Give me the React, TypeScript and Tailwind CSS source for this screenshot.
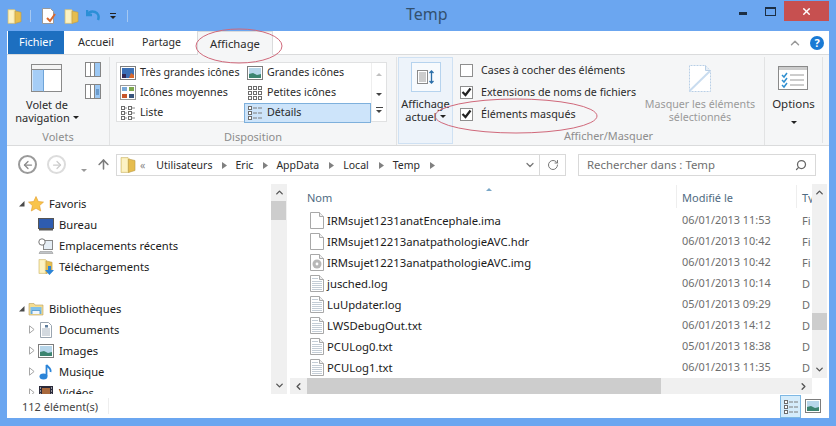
import * as React from 'react';
import { ArrowLeft, ArrowRight, ArrowUp, ChevronDown, ChevronLeft, ChevronRight, ChevronUp, RotateCw, Search, X } from 'lucide-react';

const FILES = [
	{ name: 'IRMsujet1231anatEncephale.ima', date: '06/01/2013 11:53', type: 'Fi', icon: 'blank' },
	{ name: 'IRMsujet12213anatpathologieAVC.hdr', date: '06/01/2013 10:42', type: 'Fi', icon: 'blank' },
	{ name: 'IRMsujet12213anatpathologieAVC.img', date: '06/01/2013 10:42', type: 'Fi', icon: 'disc' },
	{ name: 'jusched.log', date: '06/01/2013 10:14', type: 'D', icon: 'text' },
	{ name: 'LuUpdater.log', date: '05/01/2013 09:29', type: 'D', icon: 'text' },
	{ name: 'LWSDebugOut.txt', date: '06/01/2013 14:12', type: 'D', icon: 'text' },
	{ name: 'PCULog0.txt', date: '05/01/2013 18:38', type: 'D', icon: 'text' },
	{ name: 'PCULog1.txt', date: '06/01/2013 11:35', type: 'D', icon: 'text' },
];

function Folder({ size = 16 }: { size?: number }) {
	return (
		<svg width={size} height={size} viewBox="0 0 16 16" className="shrink-0">
			<path d="M1 .5h7l1 1v14H1z" fill="#f6e6a4" stroke="#cdb874" strokeWidth="0.6" />
			<path d="M8.500 2l6.500 1.500v10L8.500 15.500z" fill="#e6bd4e" stroke="#b99a48" strokeWidth="0.6" />
			<path d="M2 1.500h5v13H2z" fill="#fcf2c4" />
		</svg>
	);
}

function Tri({ open }: { open?: boolean }) {
	if (open) {
		return (
			<svg width="7" height="7" viewBox="0 0 7 7" className="shrink-0">
				<path d="M6.500 1v5.500H1z" fill="#4a4a4a" />
			</svg>
		);
	}
	return (
		<svg width="6" height="9" viewBox="0 0 6 9" className="shrink-0">
			<path d="M.5.8l4.600 3.700L.5 8.200z" fill="#fff" stroke="#a6a6a6" />
		</svg>
	);
}

function SmallTri() {
	return (
		<svg width="5" height="7" viewBox="0 0 5 7" className="shrink-0">
			<path d="M0 0l5 3.500L0 7z" fill="#808080" />
		</svg>
	);
}

function Caret({ color = '#222' }: { color?: string }) {
	return (
		<svg width="6" height="3" viewBox="0 0 6 3" className="inline-block shrink-0">
			<path d="M0 0h6L3 3z" fill={color} />
		</svg>
	);
}

function PaneIcon({ side }: { side: 'left' | 'right' | 'detail' }) {
	if (side === 'left') {
		return (
			<svg width="32" height="29" viewBox="0 0 32 29">
				<rect x=".5" y=".5" width="30" height="27" fill="#fff" stroke="#8a8a8a" />
				<rect x="1" y="1" width="29" height="4" fill="#f4f4f4" />
				<path d="M.5 5.500h30" stroke="#8a8a8a" />
				<rect x="1.500" y="6" width="11" height="21" fill="#a5cdf6" />
				<path d="M12.500 5.500v22" stroke="#6ea4d8" />
			</svg>
		);
	}
	return (
		<svg width="16" height="15" viewBox="0 0 16 15">
			<rect x=".5" y=".5" width="15" height="14" fill="#fff" stroke="#858585" />
			<rect x="10" y="1" width="5" height="13" fill="#9cc8f4" />
			<path d="M5.500 1v13M9.500 1v13" stroke="#858585" />
			{side === 'detail' && <path d="M11 6h3M11 8h3M11 10h3" stroke="#3a6ea5" />}
		</svg>
	);
}

function ViewIcon({ kind }: { kind: string }) {
	if (kind === 'xl' || kind === 'l') {
		return (
			<svg width="16" height="14" viewBox="0 0 16 14" className="shrink-0">
				<rect x=".5" y=".5" width="15" height="13" fill="#fff" stroke="#7d7d7d" />
				<rect x="2" y="2" width="12" height="10" fill={kind === 'xl' ? '#3b6fb5' : '#b7d6ea'} />
				{kind === 'xl' ? (
					<>
						<path d="M2 12V8h4v4z" fill="#332a55" />
						<path d="M9 12l2-5 3 2v3z" fill="#d8682c" />
					</>
				) : (
					<path d="M2 12V8l4-1 4 2 4-1v4z" fill="#3c8470" />
				)}
			</svg>
		);
	}
	if (kind === 'm') {
		return (
			<svg width="16" height="15" viewBox="0 0 16 15" className="shrink-0">
				<rect x=".5" y=".5" width="15" height="14" fill="#fff" stroke="#9a9a9a" />
				<rect x="2" y="2" width="5" height="4" fill="#79a9d8" />
				<rect x="9" y="2" width="5" height="4" fill="#7da84c" />
				<rect x="2" y="9" width="5" height="4" fill="#c8552a" />
				<rect x="9" y="9" width="5" height="4" fill="#38547c" />
			</svg>
		);
	}
	const cols = kind === 's' ? [1, 6, 11] : kind === 'list' ? [1, 8] : [1];
	const rows = [1, 6, 11];
	return (
		<svg width="16" height="15" viewBox="0 0 16 15" className="shrink-0">
			{cols.map((x) =>
				rows.map((y) => (
					<rect key={`${x}-${y}`} x={x + 0.5} y={y + 0.5} width="3" height="3" fill="#fff" stroke="#6d6d6d" />
				)),
			)}
			{kind === 'list' && <path d="M5 3h2M5 8h2M5 13h2M12 3h3M12 8h3M12 13h3" stroke="#8a8a8a" />}
			{kind === 'details' && <path d="M6 3h10M6 8h10M6 13h10" stroke="#7d7d7d" strokeDasharray="4 1" />}
		</svg>
	);
}

function FileIcon({ kind }: { kind: string }) {
	return (
		<svg width="14" height="17" viewBox="0 0 14 17" className="shrink-0">
			<path d="M.5.5h9l4 4v12H.5z" fill="#fff" stroke="#a8a8a8" />
			<path d="M9.500.5v4h4" fill="#eee" stroke="#a8a8a8" />
			{kind === 'text' && (
				<path d="M2 3.500h6M2 6.500h10M2 8.500h10M2 10.500h10M2 12.500h10M2 14.500h10" stroke="#c4cdd6" />
			)}
			{kind === 'disc' && (
				<>
					<circle cx="7" cy="10" r="4.500" fill="#b8b8b8" />
					<circle cx="7" cy="10" r="1.400" fill="#fff" />
				</>
			)}
		</svg>
	);
}

function TreeRow({ label, indent, open, arrow, icon, mt }: { label: string; indent: boolean; open?: boolean; arrow?: boolean; icon: React.ReactNode; mt?: string }) {
	return (
		<div className={`flex h-[21px] shrink-0 items-center text-[11.2px] text-[#1b1b1b] ${mt ?? ''}`}>
			<div className={`flex w-[11px] shrink-0 justify-center ${indent ? 'ml-[19px]' : 'ml-[9px]'}`}>
				{arrow && <Tri open={open} />}
			</div>
			<div className="flex w-[17px] shrink-0 justify-center">{icon}</div>
			<span className="ml-[5px] whitespace-nowrap">{label}</span>
		</div>
	);
}

function Check({ checked }: { checked?: boolean }) {
	return (
		<div className="flex h-[13px] w-[13px] shrink-0 items-center justify-center border border-[#8e8e8e] bg-white">
			{checked && (
				<svg width="11" height="10" viewBox="0 0 11 10">
					<path d="M1.500 5l3 3L9.500 1.500" fill="none" stroke="#222" strokeWidth="2.200" />
				</svg>
			)}
		</div>
	);
}

function GalleryItem({ kind, label, selected }: { kind: string; label: string; selected?: boolean }) {
	return (
		<div className={`flex h-[20px] items-center pb-[1px] ${selected ? 'border border-[#7eb0dc] bg-[#cde4fa] pl-[2px]' : 'pl-[3px]'}`}>
			<ViewIcon kind={kind} />
			<span className="ml-[4px] whitespace-nowrap pb-px text-[10.7px]">{label}</span>
		</div>
	);
}

export default function App() {
	return (
		<div className="relative flex h-[426px] w-[836px] flex-col overflow-hidden bg-[#6ba6f0] font-['Noto_Sans',sans-serif] text-[11px] leading-none text-[#2b2b2b]">
			{/* title bar */}
			<div className="relative flex h-[31px] shrink-0 items-start pl-[7px]">
				<div className="mt-[8px] flex items-center">
					<Folder size={15} />
					<div className="ml-[8px] h-[12px] w-px bg-[#a5c8f2]" />
					<svg width="16" height="16" viewBox="0 0 16 16" className="ml-[10px]">
						<path d="M1.500.5h8l3 3v12h-11z" fill="#fff" stroke="#999" />
						<path d="M6 10l3 3 5-7" fill="none" stroke="#d8672e" strokeWidth="2" />
					</svg>
					<div className="ml-[7px]">
						<Folder size={15} />
					</div>
					<svg width="15" height="14" viewBox="0 0 15 14" className="ml-[7px]">
						<path d="M1 1v5h5M1.500 6C3 3 6 2 9 3s4.500 4 3 8" fill="none" stroke="#2b8fd6" strokeWidth="2.500" />
					</svg>
					<div className="ml-[9px] flex flex-col items-center gap-[2px]">
						<div className="h-px w-[6px] bg-[#222]" />
						<Caret />
					</div>
					<div className="ml-[11px] h-[12px] w-px bg-[#a5c8f2]" />
				</div>
				<div className="absolute left-[406px] top-[4px] text-[16px] leading-[20px] text-[#33506e]">Temp</div>
				<div className="ml-auto mr-[7px] flex items-start">
					<div className="mr-[18px] mt-[12px] h-[3px] w-[8px] bg-[#1d2f44]" />
					<div className="mr-[8px] mt-[7px] h-[9px] w-[11px] border border-t-[2px] border-[#1d2f44]" />
					<div className="mt-px flex h-[20px] w-[45px] items-center justify-center bg-[#c75050]">
						<X size={11} strokeWidth={3} color="#fff" />
					</div>
				</div>
			</div>

			{/* main window */}
			<div className="mx-[7px] flex h-[387px] shrink-0 flex-col bg-white">
				{/* tabs */}
				<div className="flex h-[24px] shrink-0 border-b border-[#dadbdc]">
					<div className="ml-px flex h-[23px] w-[56px] items-center justify-center bg-[#1d6fc0] text-[10.900px] text-white">Fichier</div>
					<div className="ml-[14px] flex h-[23px] w-[36px] items-center justify-center text-[10.900px]">Accueil</div>
					<div className="ml-[28px] flex h-[23px] w-[39px] items-center justify-center text-[10.600px]">Partage</div>
					<div className="ml-[16px] flex h-[24px] w-[76px] items-center justify-center border-x border-t border-[#dadbdc] bg-[#f5f6f7] text-[11.300px]">Affichage</div>
					<div className="ml-auto mr-[5px] flex items-center gap-[8px]">
						<ChevronUp size={14} strokeWidth={2.500} color="#9a9a9a" />
						<div className="flex h-[14px] w-[14px] items-center justify-center rounded-full bg-[#1a7ad4] text-[11px] font-bold text-white">?</div>
					</div>
				</div>

				{/* ribbon */}
				<div className="flex h-[91px] shrink-0 border-b border-[#dadbdc] bg-[#f5f6f7]">
					{/* Volets */}
					<div className="mt-[2px] flex w-[103px] shrink-0 flex-col border-r border-[#e2e3e4]">
						<div className="flex flex-1">
							<div className="flex w-[80px] flex-col items-center pt-[7px]">
								<PaneIcon side="left" />
								<div className="mt-[5px] flex h-[13px] items-center">Volet de</div>
								<div className="flex h-[13px] items-center gap-[3px] whitespace-nowrap">navigation <Caret /></div>
							</div>
							<div className="-ml-[2px] flex flex-col gap-[7px] pt-[5px]">
								<PaneIcon side="right" />
								<PaneIcon side="detail" />
							</div>
						</div>
						<div className="flex h-[18px] items-center justify-center text-[#8d8d8d]">Volets</div>
					</div>

					{/* Disposition */}
					<div className="mt-[2px] flex w-[287px] shrink-0 flex-col border-r border-[#e2e3e4]">
						<div className="flex-1 pl-[6px] pt-[5px]">
							<div className="flex h-[60px] w-[271px] border border-[#e0e1e2] bg-white">
								<div className="grid w-[254px] grid-cols-[127px_127px] grid-rows-[20px_20px_20px]">
									<GalleryItem kind="xl" label="Très grandes icônes" />
									<GalleryItem kind="l" label="Grandes icônes" />
									<GalleryItem kind="m" label="Icônes moyennes" />
									<GalleryItem kind="s" label="Petites icônes" />
									<GalleryItem kind="list" label="Liste" />
									<GalleryItem kind="details" label="Détails" selected />
								</div>
								<div className="flex flex-1 flex-col items-center justify-around border-l border-[#eeeeee] py-[3px]">
									<div className="rotate-180"><Caret color="#c0c0c0" /></div>
									<Caret color="#444" />
									<div className="flex flex-col items-center gap-[2px]">
										<div className="h-px w-[7px] bg-[#444]" />
										<Caret color="#444" />
									</div>
								</div>
							</div>
						</div>
						<div className="flex h-[18px] items-center justify-center text-[#8d8d8d]">Disposition</div>
					</div>

					{/* Affichage actuel */}
					<div className="ml-px mt-[2px] flex h-[87px] w-[55px] shrink-0 flex-col items-center border border-[#cfe1f3] bg-[#edf3fa] pt-[4px]">
						<div className="flex h-[30px] w-[30px] items-center justify-center border border-[#b6d3ee] bg-[#f7fafd]">
							<svg width="18" height="14" viewBox="0 0 18 14">
								<rect x=".5" y=".5" width="10" height="13" fill="#fff" stroke="#8a8a8a" />
								<path d="M2 3h7M2 5h7M2 7h7M2 9h7M2 11h7" stroke="#9a9a9a" />
								<path d="M14.500 1v12M12.500 3l2-2 2 2M12.500 11l2 2 2-2" fill="none" stroke="#2b6ea8" strokeWidth="1.300" />
							</svg>
						</div>
						<div className="mt-[5px] flex h-[13px] items-center">Affichage</div>
						<div className="flex h-[13px] items-center gap-[3px]">actuel <Caret /></div>
					</div>

					{/* Afficher/Masquer */}
					<div className="mt-[2px] flex w-[312px] shrink-0 flex-col border-r border-[#e2e3e4]">
						<div className="flex flex-1">
							<div className="flex w-[187px] flex-col pl-[7px] pt-[2px] text-[10.700px]">
								<div className="flex h-[22px] items-center gap-[8px]"><Check /><span className="whitespace-nowrap">Cases à cocher des éléments</span></div>
								<div className="flex h-[22px] items-center gap-[8px]"><Check checked /><span className="whitespace-nowrap">Extensions de noms de fichiers</span></div>
								<div className="flex h-[22px] items-center gap-[8px]"><Check checked /><span className="whitespace-nowrap">Éléments masqués</span></div>
							</div>
							<div className="flex w-[120px] flex-col items-center pt-[7px] text-[10.700px] text-[#9a9a9a]">
								<svg width="26" height="29" viewBox="0 0 26 29">
									<path d="M2.500 27.500V1.500h16l5 5v21z" fill="#fff" stroke="#b9cfe6" strokeDasharray="2 1" />
									<path d="M2.500 27L23 7" stroke="#c9dcef" strokeWidth="2" />
									<path d="M18.500 1.500v5h5" fill="#e6eef6" stroke="#b9cfe6" />
								</svg>
								<div className="mt-[5px] flex h-[13px] items-center whitespace-nowrap">Masquer les éléments</div>
								<div className="flex h-[13px] items-center whitespace-nowrap">sélectionnés</div>
							</div>
						</div>
						<div className="flex h-[18px] items-center justify-center text-[10.900px] text-[#8d8d8d]">Afficher/Masquer</div>
					</div>

					{/* Options */}
					<div className="mt-[2px] mb-[2px] flex w-[58px] shrink-0 flex-col items-center border-r border-[#e2e3e4] pt-[9px]">
						<svg width="31" height="24" viewBox="0 0 31 24">
							<rect x=".5" y=".5" width="29" height="23" fill="#fff" stroke="#8a8a8a" />
							<path d="M1 2.500h28" stroke="#cccccc" strokeWidth="3" />
							<path d="M4 9l2 2 3-4M4 14l2 2 3-4M4 19l2 2 3-4" fill="none" stroke="#2f8fd0" strokeWidth="1.500" />
							<path d="M12 9h14M12 14h14M12 19h14" stroke="#9a9a9a" />
						</svg>
						<div className="mt-[7px] flex h-[13px] items-center text-[11.500px]">Options</div>
						<div className="mt-[5px]"><Caret /></div>
					</div>
				</div>

				{/* address row */}
				<div className="flex h-[38px] shrink-0 items-start text-[#2b2b2b]">
					<div className="ml-[11px] mt-[9px] flex h-[19px] w-[19px] items-center justify-center rounded-full border-2 border-[#9a9a9a]">
						<ArrowLeft size={12} strokeWidth={2.500} color="#8a8a8a" />
					</div>
					<div className="ml-[10px] mt-[9px] flex h-[19px] w-[19px] items-center justify-center rounded-full border-2 border-[#dcdcdc]">
						<ArrowRight size={12} strokeWidth={2.500} color="#cccccc" />
					</div>
					<div className="ml-[15px] mt-[17px]"><Caret color="#9a9a9a" /></div>
					<div className="ml-[9px] mt-[11px]"><ArrowUp size={15} strokeWidth={2.500} color="#7d7d7d" /></div>
					<div className="ml-[5px] mt-[8px] flex h-[22px] w-[450px] items-center border border-[#d9d9d9] pl-[3px] text-[10.500px]">
						<Folder size={16} />
						<span className="ml-[4px] text-[#8a8a8a]">«</span>
						<span className="ml-[11px]">Utilisateurs</span>
						<span className="ml-[10px] mr-[8px]"><SmallTri /></span>
						<span>Eric</span>
						<span className="ml-[10px] mr-[8px]"><SmallTri /></span>
						<span>AppData</span>
						<span className="ml-[10px] mr-[9px]"><SmallTri /></span>
						<span>Local</span>
						<span className="ml-[10px] mr-[9px]"><SmallTri /></span>
						<span>Temp</span>
						<span className="ml-[10px] mr-[9px]"><SmallTri /></span>
						<div className="ml-auto flex h-full items-center">
							<ChevronDown size={12} strokeWidth={2.500} color="#777" />
							<div className="ml-[3px] h-full w-px bg-[#d9d9d9]" />
							<div className="flex w-[25px] justify-center"><RotateCw size={12} strokeWidth={2} color="#777" /></div>
						</div>
					</div>
					<div className="ml-[12px] mt-[8px] flex h-[22px] w-[238px] items-center justify-between border border-[#d9d9d9] pl-[8px] pr-[8px] text-[11.400px] text-[#6f6f6f]">
						<span>Rechercher dans : Temp</span>
						<Search size={12} strokeWidth={2.500} color="#666" className="-scale-x-100" />
					</div>
				</div>

				{/* panes */}
				<div className="flex h-[210px] shrink-0">
					<div className="flex w-[264px] shrink-0 flex-col overflow-hidden">
						<TreeRow mt="mt-[9px]" label="Favoris" indent={false} open arrow icon={
							<svg width="16" height="16" viewBox="0 0 16 16"><path d="M8 .5l2.300 5 5.200.6-3.900 3.500 1.100 5.400L8 12.300 3.300 15l1.100-5.400L.5 6.100l5.200-.6z" fill="#f9c44a" stroke="#e09a2a" strokeWidth=".6" /></svg>
						} />
						<TreeRow label="Bureau" indent={true} icon={
							<svg width="16" height="13" viewBox="0 0 16 13"><rect x=".5" y=".5" width="15" height="10" fill="#2e5cb0" stroke="#555" /><path d="M1 11.500h14" stroke="#555" strokeWidth="2" /></svg>
						} />
						<TreeRow label="Emplacements récents" indent={true} icon={
							<svg width="16" height="16" viewBox="0 0 16 16"><rect x="5.500" y="2.500" width="9" height="9" fill="#e6eef5" stroke="#888" /><circle cx="4" cy="4" r="3.200" fill="#fff" stroke="#777" /><path d="M2 13.500h12l1 2H1z" fill="#c0c4c8" stroke="#888" strokeWidth=".5" /></svg>
						} />
						<TreeRow label="Téléchargements" indent={true} icon={
							<div className="relative h-[16px] w-[16px]">
								<Folder size={15} />
								<svg width="9" height="9" viewBox="0 0 9 9" className="absolute bottom-0 right-0"><path d="M3 0h3v4h3L4.500 9 0 4h3z" fill="#2b84d8" /></svg>
							</div>
						} />
						<TreeRow mt="mt-[21px]" label="Bibliothèques" indent={false} open arrow icon={
							<svg width="16" height="15" viewBox="0 0 16 15"><path d="M1 2.500h5l1 1.500h8v10H1z" fill="#f5dd90" stroke="#b9a060" strokeWidth=".6" /><rect x="2.500" y="6" width="11" height="7" fill="#7fc0ea" /><path d="M4 13V9.500h8V13" fill="#f0f6fc" stroke="#4a90c8" strokeWidth=".8" /></svg>
						} />
						<TreeRow label="Documents" indent={true} arrow icon={
							<svg width="14" height="16" viewBox="0 0 14 16"><path d="M1.500.5h8l3 3v12h-11z" fill="#fff" stroke="#9aa5b0" /><path d="M3 7h8M3 9h8M3 11h8M3 13h8" stroke="#a8b4c0" /><rect x="6" y="3" width="3" height="2.500" fill="#5f7d9c" /></svg>
						} />
						<TreeRow label="Images" indent={true} arrow icon={<ViewIcon kind="l" />} />
						<TreeRow label="Musique" indent={true} arrow icon={
							<svg width="14" height="16" viewBox="0 0 14 16"><ellipse cx="4.500" cy="12.500" rx="4" ry="3" fill="#2b84d8" /><path d="M7.500 12V1c1 2 5 3 4 7" fill="none" stroke="#2b84d8" strokeWidth="1.800" /></svg>
						} />
						<TreeRow label="Vidéos" indent={true} arrow icon={
							<svg width="14" height="14" viewBox="0 0 14 14"><rect width="14" height="14" fill="#2a2a3a" /><rect x="3" y="2" width="8" height="10" fill="#a8683c" /><path d="M1 2h1M1 5h1M1 8h1M1 11h1M12 2h1M12 5h1M12 8h1M12 11h1" stroke="#fff" /></svg>
						} />
					</div>
					<div className="flex w-[16px] shrink-0 flex-col items-center justify-between bg-[#f0f0f0] py-[3px]">
						<ChevronUp size={11} strokeWidth={3} color="#555" />
						<ChevronDown size={11} strokeWidth={3} color="#555" />
					</div>
					<div className="ml-[3px] flex min-w-0 flex-1 flex-col">
						<div className="flex flex-1">
							<div className="flex w-[522px] flex-col overflow-hidden">
								<div className="relative flex h-[26px] shrink-0 items-start text-[#4f6b82]">
									<div className="absolute left-[196px] top-[2px] rotate-180"><Caret color="#7aa7c7" /></div>
									<div className="w-[386px] pl-[17px] pt-[8px]">Nom</div>
									<div className="mt-px h-[23px] w-px bg-[#eeeeee]" />
									<div className="w-[119px] pl-[5px] pt-[8px]">Modifié le</div>
									<div className="mt-px h-[23px] w-px bg-[#eeeeee]" />
									<div className="w-[15px] overflow-hidden pl-[5px] pt-[8px]">Type</div>
								</div>
								{FILES.map((f) => (
									<div key={f.name} className="flex h-[21px] shrink-0 items-center pl-[20px]">
										<FileIcon kind={f.icon} />
										<span className="ml-[3px] w-[353px] whitespace-nowrap text-[11.300px] text-[#1b1b1b]">{f.name}</span>
										<span className="ml-[2px] w-[120px] whitespace-nowrap text-[10.900px] text-[#6d6d6d]">{f.date}</span>
										<span className="text-[#6d6d6d]">{f.type}</span>
									</div>
								))}
							</div>
							<div className="flex w-[15px] shrink-0 flex-col items-center justify-between bg-[#f0f0f0] py-[3px]">
								<ChevronUp size={11} strokeWidth={3} color="#555" />
								<ChevronDown size={11} strokeWidth={3} color="#555" />
							</div>
						</div>
						<div className="flex h-[16px] w-[522px] shrink-0 items-center bg-[#f0f0f0]">
							<ChevronLeft size={11} strokeWidth={3} color="#555" className="ml-[3px]" />
							<div className="ml-[3px] h-full w-[354px] bg-[#cdcdcd]" />
							<ChevronRight size={11} strokeWidth={3} color="#555" className="ml-auto mr-[3px]" />
						</div>
					</div>
				</div>

				{/* status bar */}
				<div className="flex h-[24px] shrink-0 items-center">
					<span className="ml-[15px] text-[#444]">112 élément(s)</span>
					<div className="ml-[10px] h-[16px] w-px bg-[#eeeeee]" />
					<div className="ml-auto mr-[8px] flex items-center gap-[4px]">
						<div className="flex h-[23px] w-[21px] items-center justify-center border border-[#7eb8e4] bg-[#d5ecfb]">
							<ViewIcon kind="details" />
						</div>
						<ViewIcon kind="l" />
					</div>
				</div>
			</div>

			{/* red annotation ellipses drawn on top of the screenshot */}
			<svg width="88" height="36" viewBox="0 0 88 36" className="absolute left-[195px] top-[28px]">
				<ellipse cx="44" cy="18" rx="43" ry="17" fill="none" stroke="#d0687a" />
			</svg>
			<svg width="164" height="36" viewBox="0 0 164 36" className="absolute left-[434px] top-[98px]">
				<ellipse cx="82" cy="18" rx="81" ry="17" fill="none" stroke="#d0687a" />
			</svg>
			{/* scroll thumbs */}
			<div className="absolute left-[271px] top-[201px] h-[19px] w-[15px] bg-[#cdcdcd]" />
			<div className="absolute left-[812px] top-[313px] h-[17px] w-[15px] bg-[#cdcdcd]" />
		</div>
	);
}
